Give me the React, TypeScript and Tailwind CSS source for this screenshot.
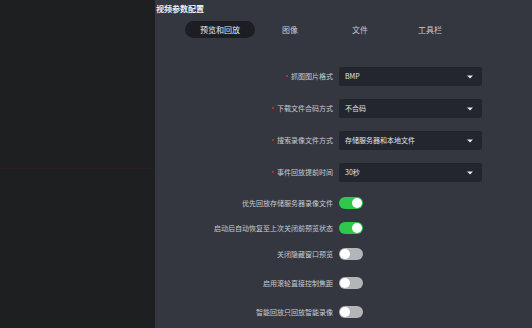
import React from "react";

const selects = [
  { label: "抓图图片格式", value: "BMP" },
  { label: "下载文件合码方式", value: "不合码" },
  { label: "搜索录像文件方式", value: "存储服务器和本地文件" },
  { label: "事件回放提前时间", value: "30秒" },
];

const toggles = [
  { label: "优先回放存储服务器录像文件", on: true, mt: "mt-[15px]" },
  { label: "启动后自动恢复至上次关闭前预览状态", on: true, mt: "mt-[13px]" },
  { label: "关闭隐藏窗口预览", on: false, mt: "mt-[14px]" },
  { label: "启用滚轮直接控制焦距", on: false, mt: "mt-[17px]" },
  { label: "智能回放只回放智能录像", on: false, mt: "mt-[17px]" },
];

function Caret() {
  return (
    <svg width="6" height="4" viewBox="0 0 6 4" className="shrink-0">
      <path d="M0 0.5 L6 0.5 L3 3.5 Z" fill="#e6e8ec" />
    </svg>
  );
}

export default function App() {
  return (
    <div
      className="w-[532px] h-[328px] flex overflow-hidden"
      style={{ fontFamily: '"Noto Sans CJK SC", "Noto Sans", sans-serif' }}
    >
      <div className="w-[155px] h-full bg-[#1e1f21] shrink-0">
        <div className="h-[169px] border-b border-[#2c1d23]" />
      </div>
      <div className="flex-1 h-full bg-[#353740] flex flex-col">
        <div className="pl-[1px] pt-[4px] h-[10px] text-[8px] leading-[10px] font-bold text-[#eef0f4]">
          视频参数配置
        </div>
        <div className="flex mt-[11px] ml-[30px] h-[17px]">
          <div className="w-[70px] h-[17px] rounded-full bg-[#1c1e24] flex items-center justify-center text-[8px] text-[#e8eaee]">
            预览和回放
          </div>
          {["图像", "文件", "工具栏"].map((t) => (
            <div
              key={t}
              className="w-[70px] h-[17px] flex items-center justify-center text-[8px] text-[#c8cbd1]"
            >
              {t}
            </div>
          ))}
        </div>
        <div className="flex flex-col gap-[13px] mt-[29px]">
          {selects.map((s) => (
            <div key={s.label} className="flex items-center h-[19px]">
              <div className="w-[178px] flex justify-end items-center text-[7px] text-[#c8cbd0]">
                <span className="w-[2px] h-[2px] rounded-full bg-[#e5262b] mr-[3px] -translate-y-[1px]" />
                {s.label}
              </div>
              <div className="ml-[6px] w-[143px] h-[19px] bg-[#24262d] rounded-[2px] flex items-center justify-between pl-[6px] pr-[9px] text-[7px] text-[#e3e5ea]">
                <span>{s.value}</span>
                <Caret />
              </div>
            </div>
          ))}
        </div>
        {toggles.map((t) => (
          <div key={t.label} className={`flex items-center h-[12px] ${t.mt}`}>
            <div className="w-[178px] text-right text-[7px] text-[#c8cbd0]">
              {t.label}
            </div>
            <div
              className={`ml-[6px] w-[24px] h-[12px] rounded-full flex items-center px-[1px] ${
                t.on ? "bg-[#2fc84a] justify-end" : "bg-[#b4b5b8] justify-start"
              }`}
            >
              <div className="w-[10px] h-[10px] rounded-full bg-white" />
            </div>
          </div>
        ))}
      </div>
    </div>
  );
}
